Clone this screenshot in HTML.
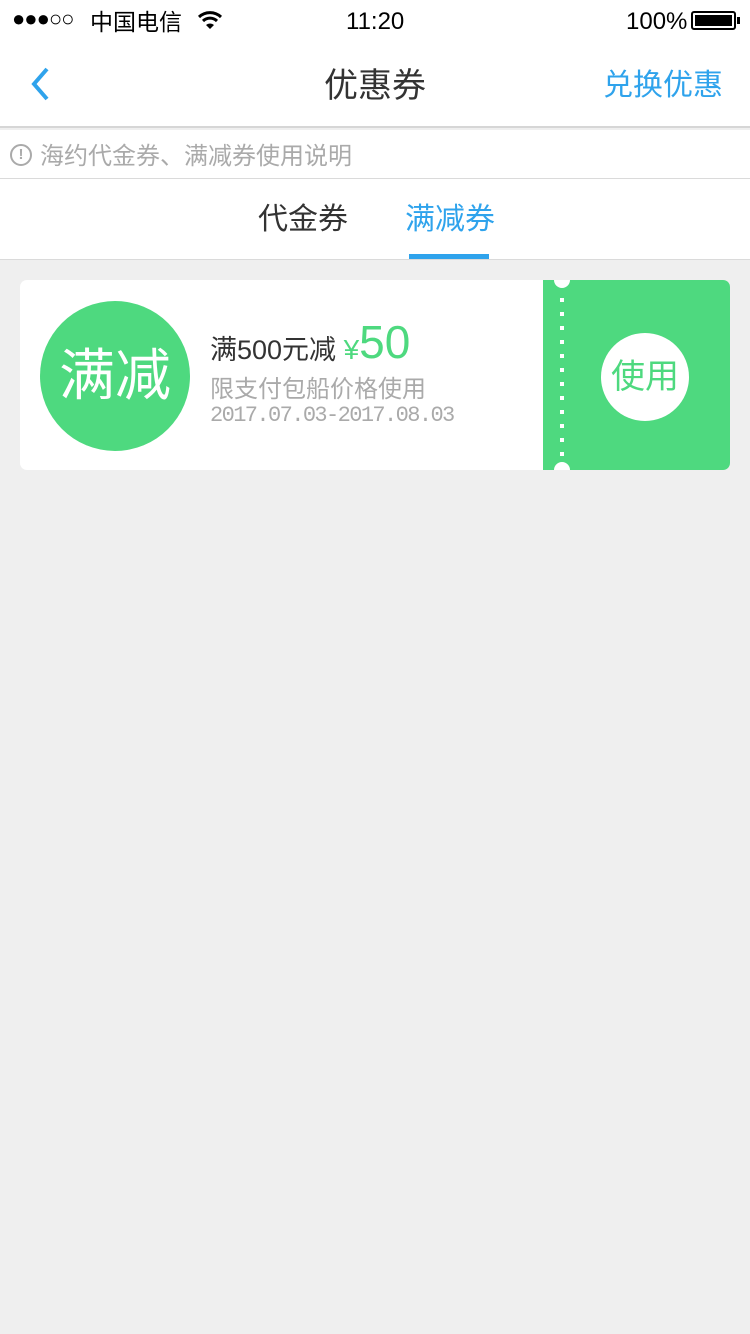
<!DOCTYPE html>
<html><head><meta charset="utf-8"><style>
*{margin:0;padding:0;box-sizing:border-box}
body{width:750px;height:1334px;background:#efefef;font-family:"Liberation Sans","Noto Sans CJK SC",sans-serif;position:relative;overflow:hidden}
.a{position:absolute;white-space:nowrap}
</style></head><body>
<div class="a" style="left:0;top:0;width:750px;height:128px;background:#fff;border-bottom:2px solid #d6d6d6"></div>
<div class="a" style="left:12px;top:6px;font-size:22px;color:#000;letter-spacing:-1px">●●●○○</div>
<div class="a" style="left:90px;top:3px;font-size:23px;color:#000">中国电信</div>
<svg class="a" style="left:197px;top:9px" width="26" height="22" viewBox="0 0 26 22"><path d="M2 8a16 16 0 0 1 22 0" stroke="#000" stroke-width="3" fill="none"/><path d="M6 12a10 10 0 0 1 14 0" stroke="#000" stroke-width="3" fill="none"/><path d="M13 20l-4-4a6 6 0 0 1 8 0z" fill="#000"/></svg>
<div class="a" style="left:346px;top:8px;font-size:24px;color:#000">11:20</div>
<div class="a" style="left:626px;top:8px;font-size:24px;color:#000">100%</div>
<div class="a" style="left:691px;top:11px;width:45px;height:19px;border:2px solid #000;border-radius:3px;padding:2px"><div style="width:100%;height:100%;background:#000"></div></div>
<div class="a" style="left:737px;top:17px;width:3px;height:7px;background:#000"></div>
<svg class="a" style="left:28px;top:66px" width="24" height="36" viewBox="0 0 24 36"><path d="M19 3L6 18l13 15" stroke="#2fa3ec" stroke-width="4" fill="none"/></svg>
<div class="a" style="left:0;width:750px;top:58px;text-align:center;font-size:34px;color:#333">优惠券</div>
<div class="a" style="left:603px;top:60px;font-size:30px;color:#2fa3ec">兑换优惠</div>
<div class="a" style="left:0;top:130px;width:750px;height:49px;background:#fff;border-bottom:1px solid #dadada"></div>
<div class="a" style="left:10px;top:144px;width:22px;height:22px;border:2px solid #aaa;border-radius:50%;font-size:15px;color:#aaa;text-align:center;line-height:18px;font-weight:bold">!</div>
<div class="a" style="left:40px;top:136px;font-size:24px;color:#aaa">海约代金券、满减券使用说明</div>
<div class="a" style="left:0;top:179px;width:750px;height:81px;background:#fff;border-bottom:1px solid #dadada"></div>
<div class="a" style="left:258px;top:194px;font-size:30px;color:#333">代金券</div>
<div class="a" style="left:405px;top:194px;font-size:30px;color:#2fa3ec">满减券</div>
<div class="a" style="left:409px;top:254px;width:80px;height:5px;background:#2fa3ec"></div>
<div class="a" style="left:20px;top:280px;width:710px;height:190px;background:#fff;border-radius:7px;overflow:hidden">
<div class="a" style="left:523px;top:0;width:187px;height:190px;background:#4ed97f"></div>
<div class="a" style="left:534px;top:-8px;width:16px;height:16px;border-radius:50%;background:#fff"></div>
<div class="a" style="left:534px;top:182px;width:16px;height:16px;border-radius:50%;background:#fff"></div>
<svg class="a" style="left:540px;top:0" width="4" height="190"><line x1="2" y1="18" x2="2" y2="178" stroke="#fff" stroke-width="4" stroke-dasharray="4 10" stroke-linecap="butt"/></svg>
</div>
<div class="a" style="left:40px;top:301px;width:150px;height:150px;border-radius:50%;background:#4ed97f;color:#fff;font-size:56px;text-align:center;line-height:150px">满减</div>
<div class="a" style="left:210px;top:316px;font-size:27px;color:#333">满500元减 <span style="color:#4ed97f;font-size:28px">¥</span><span style="color:#4ed97f;font-size:46px;position:relative;top:-1px">50</span></div>
<div class="a" style="left:210px;top:369px;font-size:24px;color:#aaa">限支付包船价格使用</div>
<div class="a" style="left:210px;top:403px;font-size:22px;color:#aaa;font-family:'Liberation Mono',monospace;letter-spacing:-1.6px">2017.07.03-2017.08.03</div>
<div class="a" style="left:601px;top:333px;width:88px;height:88px;border-radius:50%;background:#fff;color:#4ed97f;font-size:34px;text-align:center;line-height:88px">使用</div>
</body></html>
